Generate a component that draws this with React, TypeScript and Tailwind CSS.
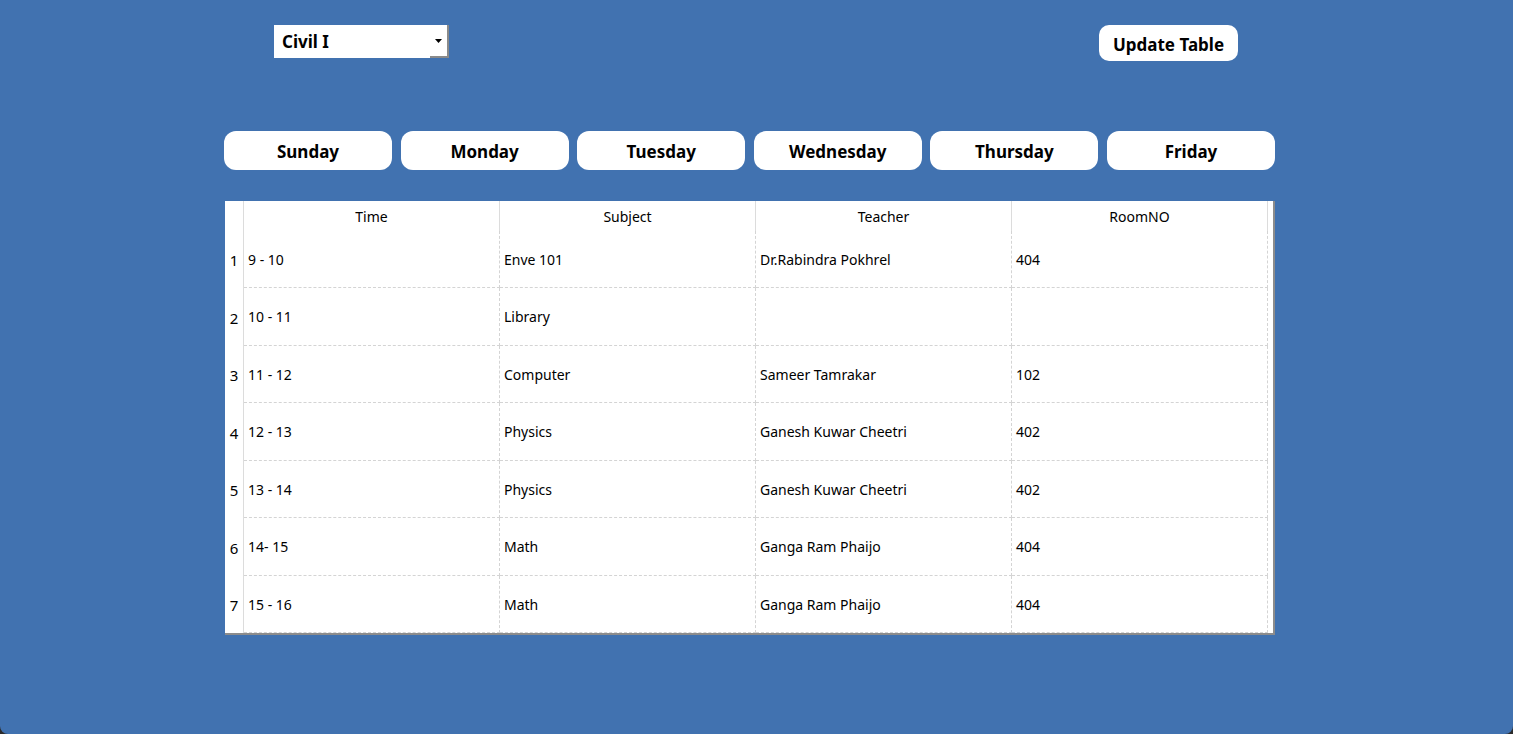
const days = ['Sunday', 'Monday', 'Tuesday', 'Wednesday', 'Thursday', 'Friday']

const rows = [
  { time: '9 - 10', subject: 'Enve 101', teacher: 'Dr.Rabindra Pokhrel', room: '404', h: 'h-[57px]' },
  { time: '10 - 11', subject: 'Library', teacher: '', room: '', h: 'h-[58px]' },
  { time: '11 - 12', subject: 'Computer', teacher: 'Sameer Tamrakar', room: '102', h: 'h-[57px]' },
  { time: '12 - 13', subject: 'Physics', teacher: 'Ganesh Kuwar Cheetri', room: '402', h: 'h-[58px]' },
  { time: '13 - 14', subject: 'Physics', teacher: 'Ganesh Kuwar Cheetri', room: '402', h: 'h-[57px]' },
  { time: '14- 15', subject: 'Math', teacher: 'Ganga Ram Phaijo', room: '404', h: 'h-[58px]' },
  { time: '15 - 16', subject: 'Math', teacher: 'Ganga Ram Phaijo', room: '404', h: 'h-[57px]' },
]

const headers = ['Time', 'Subject', 'Teacher', 'RoomNO']

export default function App() {
  return (
    <div className="w-full h-[734px] bg-[#2b2b2b] overflow-hidden" style={{ fontFamily: '"Noto Sans", "Open Sans", sans-serif' }}>
      <div className="h-full bg-[#4172b0] rounded-b-[8px]">
        <div className="ml-[224px] w-[1051px] pt-[25px]">
          {/* Top bar */}
          <div className="flex items-start h-[36px]">
            <div className="ml-[50px] w-[175px] h-[33px] bg-white flex items-stretch">
              <div className="flex-1 flex items-center pl-[8px] text-[17px] font-bold text-black leading-none">Civil I</div>
              <div className="w-[19px] flex items-center justify-center border-r-2 border-b-2 border-[#8a8a8a]">
                <svg width="7" height="4" viewBox="0 0 7 4"><path d="M0 0h7L3.5 4z" fill="#000" /></svg>
              </div>
            </div>
            <button className="ml-[650px] w-[139px] h-[36px] pt-[3px] bg-white rounded-[10px] text-[17px] font-bold text-black">
              Update Table
            </button>
          </div>

          {/* Day buttons */}
          <div className="mt-[70px] grid grid-cols-6 gap-x-[8.6px]">
            {days.map((d) => (
              <button key={d} className="h-[39px] pt-[3px] bg-white rounded-[12px] text-[17px] font-bold text-black">
                {d}
              </button>
            ))}
          </div>

          {/* Table */}
          <div className="mt-[31px] ml-[1px] w-[1050px] bg-white border-r-2 border-b-2 border-[#8c8c8c] flex text-[14px] text-black">
            <div className="w-[19px] border-r border-[#dcdcdc] flex flex-col text-[15px]">
              <div className="h-[30px]" />
              {rows.map((r, i) => (
                <div key={i} className={`${r.h} flex items-center justify-center pt-[2px]`}>{i + 1}</div>
              ))}
            </div>
            <div className="flex flex-col w-[1025px]">
              <div className="flex h-[30px]">
                {headers.map((h) => (
                  <div key={h} className="w-[256px] border-r border-[#dcdcdc] flex items-center justify-center">{h}</div>
                ))}
              </div>
              {rows.map((r, i) => (
                <div key={i} className={`flex ${r.h}`}>
                  {[r.time, r.subject, r.teacher, r.room].map((c, j) => (
                    <div key={j} className="w-[256px] border-r border-b border-dashed border-[#d4d4d4] flex items-center pl-[4px]">
                      {c}
                    </div>
                  ))}
                </div>
              ))}
            </div>
          </div>
        </div>
      </div>
    </div>
  )
}
